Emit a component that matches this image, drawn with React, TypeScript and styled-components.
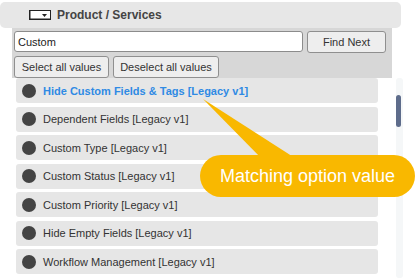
import styled, { createGlobalStyle } from 'styled-components';

const GlobalStyle = createGlobalStyle`
  html, body {
    margin: 0;
    padding: 0;
    background: #ffffff;
    font-family: 'Liberation Sans', Arial, sans-serif;
  }
`;

const Page = styled.div`
  position: relative;
  width: 419px;
  height: 278px;
  overflow: hidden;
  padding-top: 2px;
  box-sizing: border-box;
`;

const Header = styled.div`
  width: 401px;
  height: 26px;
  background: #e7e7e7;
  border-radius: 5px;
  display: flex;
  align-items: center;
  padding-left: 29px;
  box-sizing: border-box;
  gap: 6px;
`;

const HeaderTitle = styled.span`
  font-size: 12px;
  font-weight: bold;
  color: #444444;
`;

const Controls = styled.div`
  margin-left: 12px;
  width: 380px;
  height: 50px;
  background: #d7d7d7;
  padding: 3px 2px 0 2px;
  box-sizing: border-box;
  display: flex;
  flex-direction: column;
  gap: 3px;
`;

const ControlRow = styled.div`
  display: flex;
  gap: 4px;
`;

const SearchInput = styled.div`
  width: 289px;
  height: 21px;
  box-sizing: border-box;
  background: #ffffff;
  border: 1px solid #8c8c8c;
  border-radius: 3px;
  font-size: 11px;
  color: #222;
  display: flex;
  align-items: center;
  padding-left: 3px;
`;

const Button = styled.button<{ $w: number }>`
  width: ${(p) => p.$w}px;
  height: 22px;
  box-sizing: border-box;
  background: #eeeeee;
  border: 1px solid #8f8f8f;
  border-radius: 3px;
  font-family: 'Liberation Sans', Arial, sans-serif;
  font-size: 11px;
  color: #333;
  padding: 0;
  margin: 0;
`;

const ListArea = styled.div`
  margin-left: 12px;
  display: flex;
  gap: 4px;
`;

const List = styled.div`
  width: 380px;
  padding: 0 14px 0 4px;
  box-sizing: border-box;
  display: flex;
  flex-direction: column;
  gap: 3.5px;
`;

const Item = styled.div`
  height: 25px;
  background: #e6e6e6;
  border-radius: 3px;
  display: flex;
  align-items: center;
  padding-left: 6px;
  gap: 7px;
`;

const Dot = styled.span`
  width: 14px;
  height: 14px;
  border-radius: 50%;
  background: #444444;
  flex-shrink: 0;
`;

const ItemLabel = styled.span<{ $match?: boolean }>`
  font-size: 11px;
  color: ${(p) => (p.$match ? '#2f8ae4' : '#333333')};
  font-weight: ${(p) => (p.$match ? 'bold' : 'normal')};
`;

const ScrollTrack = styled.div`
  width: 7px;
  height: 200px;
  background: #f5f7f8;
  border-radius: 3px;
  padding-top: 17px;
  box-sizing: border-box;
`;

const ScrollThumb = styled.div`
  width: 5px;
  height: 32px;
  background: #5e6c8b;
  border-radius: 3px;
`;

const Callout = styled.div`
  position: absolute;
  left: 200px;
  top: 155px;
  width: 215px;
  height: 42px;
  border-radius: 21px;
  background: #f9b800;
  color: #ffffff;
  font-size: 18px;
  display: flex;
  align-items: center;
  justify-content: center;
`;

const Tail = styled.svg`
  position: absolute;
  left: 0;
  top: 0;
`;

const items = [
  { label: 'Hide Custom Fields & Tags [Legacy v1]', match: true },
  { label: 'Dependent Fields [Legacy v1]' },
  { label: 'Custom Type [Legacy v1]' },
  { label: 'Custom Status [Legacy v1]' },
  { label: 'Custom Priority [Legacy v1]' },
  { label: 'Hide Empty Fields [Legacy v1]' },
  { label: 'Workflow Management [Legacy v1]' },
];

function SelectIcon() {
  return (
    <svg width="22" height="10" viewBox="0 0 22 10">
      <rect x="0.5" y="0.5" width="21" height="9" fill="#fff" stroke="#222" />
      <line x1="1" y1="9" x2="21" y2="9" stroke="#222" strokeWidth="1" />
      <line x1="1" y1="1" x2="1" y2="9" stroke="#222" strokeWidth="1" />
      <polygon points="13,4 18,4 15.5,7" fill="#222" />
    </svg>
  );
}

export default function App() {
  return (
    <Page>
      <GlobalStyle />
      <Header>
        <SelectIcon />
        <HeaderTitle>Product / Services</HeaderTitle>
      </Header>
      <Controls>
        <ControlRow>
          <SearchInput>Custom</SearchInput>
          <Button $w={79}>Find Next</Button>
        </ControlRow>
        <ControlRow>
          <Button $w={95}>Select all values</Button>
          <Button $w={106}>Deselect all values</Button>
        </ControlRow>
      </Controls>
      <ListArea>
        <List>
          {items.map((item, index) => (
            <Item key={index}>
              <Dot />
              <ItemLabel $match={item.match}>{item.label}</ItemLabel>
            </Item>
          ))}
        </List>
        <ScrollTrack>
          <ScrollThumb />
        </ScrollTrack>
      </ListArea>
      <Tail width="419" height="278">
        <polygon points="203,99 263,160 298,160" fill="#f9b800" />
      </Tail>
      <Callout>Matching option value</Callout>
    </Page>
  );
}
